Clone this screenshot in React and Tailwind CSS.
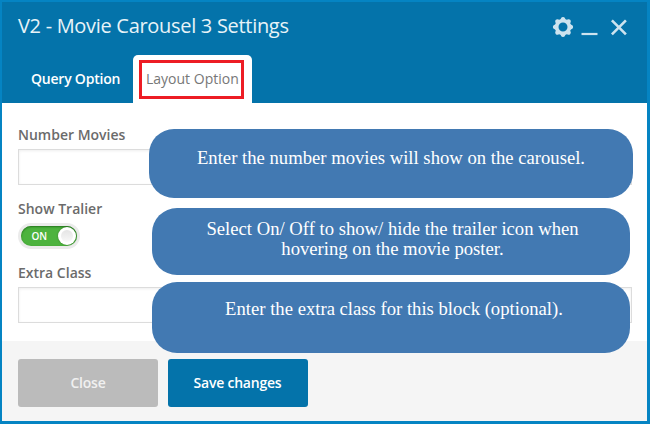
const GEAR_TEETH = [0, 45, 90, 135, 180, 225, 270, 315];

function GearIcon() {
  return (
    <svg width="22" height="22" viewBox="0 0 22 22" fill="#cde3ef">
      <circle cx="11" cy="11" r="6.3" fill="none" stroke="#cde3ef" strokeWidth="3.6" />
      {GEAR_TEETH.map((angle) => (
        <path key={angle} d="M8.1 4 L9.3 1.7 Q9.7 0.9 11 0.9 Q12.3 0.9 12.7 1.7 L13.9 4 Z" transform={`rotate(${angle} 11 11)`} />
      ))}
    </svg>
  );
}

function Header() {
  return (
    <header className="flex h-[101px] flex-col justify-between bg-[#0473aa]">
      <div className="flex items-start justify-between pl-4">
        <h1 className="mt-[10px] text-[20px] leading-7 tracking-[-0.3px] whitespace-nowrap text-[#e8f3f8]">V2 - Movie Carousel 3 Settings</h1>
        <div className="mt-[14px] mr-[17px] flex">
          <GearIcon />
          <svg className="ml-[5px]" width="22" height="22" viewBox="0 0 22 22">
            <path d="M2.5 18H18.5" stroke="#cde3ef" strokeWidth="2.2" />
          </svg>
          <svg className="ml-[7px]" width="22" height="22" viewBox="0 0 22 22">
            <path d="M3.9 4.3L17.9 18.3M17.9 4.3L3.9 18.3" stroke="#cde3ef" strokeWidth="2.6" />
          </svg>
        </div>
      </div>
      <nav className="flex h-12 pl-[15px] text-[14px] leading-5">
        <div className="w-[116px] pt-[14px] pl-[14px] font-semibold tracking-[-0.22px] whitespace-nowrap text-white">Query Option</div>
        <div className="w-[119px] rounded-t-[5px] bg-white pt-[5px] pl-[6px]">
          <div className="h-[39px] w-[105px] border-[3px] border-[#ed1c24] pt-[6px] pl-1 whitespace-nowrap text-[#777]">Layout Option</div>
        </div>
      </nav>
    </header>
  );
}

function Label({ children }) {
  return <div className="h-5 text-[14px] leading-5 font-semibold whitespace-nowrap text-[#6b6b6b]">{children}</div>;
}

function Field() {
  return <div className="h-9 border border-[#dcdcdc] bg-white shadow-[inset_0_1px_3px_#00000012]" />;
}

function Toggle() {
  return (
    <div className="flex h-[26px] w-[62px] items-center rounded-full bg-[#ebebeb] p-[3px]">
      <div className="flex h-5 w-full items-center justify-between rounded-full bg-[#4db33e] pl-[10.5px] shadow-[inset_0_1px_2px_#24751c]">
        <span className="text-[10px] leading-none font-semibold text-white">ON</span>
        <span className="mr-px flex size-[18px] items-center justify-center rounded-full bg-white shadow-[0_0_2px_#00000055]">
          <span className="size-3 rounded-full bg-linear-to-b from-[#e4e4e4] to-[#f8f8f8]" />
        </span>
      </div>
    </div>
  );
}

function Callout({ className, children }) {
  return (
    <div className={`absolute rounded-[25px] bg-[#4279b2] text-center font-['Liberation_Serif',serif] text-[18.67px] leading-5 whitespace-nowrap text-white ${className}`}>
      {children}
    </div>
  );
}

export default function App() {
  return (
    <div className="relative h-[424px] w-[650px] overflow-hidden border-t-2 border-r-[3px] border-b-[3px] border-l-2 border-[#0584c3] bg-white font-['Open_Sans',sans-serif]">
      <Header />
      <main className="h-[238px] pt-[22px] pr-[15px] pl-4">
        <Label>Number Movies</Label>
        <div className="mt-1"><Field /></div>
        <div className="mt-[14px]"><Label>Show Tralier</Label></div>
        <div className="mt-1 h-[26px]"><Toggle /></div>
        <div className="mt-[14px]"><Label>Extra Class</Label></div>
        <div className="mt-1"><Field /></div>
      </main>
      <footer className="flex h-20 gap-[10px] bg-[#f5f5f5] pt-[18px] pl-4 text-[14px] leading-5 font-semibold tracking-[-0.22px]">
        <button className="h-12 w-[140px] rounded-[3px] bg-[#bbb] text-[#f0f0f0]">Close</button>
        <button className="h-12 w-[140px] rounded-[3px] bg-[#0473aa] pr-px text-white">Save changes</button>
      </footer>
      <Callout className="top-[127px] left-[147px] h-[69px] w-[484px] pt-[19px]">Enter the number movies will show on the carousel.</Callout>
      <Callout className="top-[206px] left-[150px] h-[67px] w-[478px] pt-[11px] pl-[3px]">
        Select On/ Off to show/ hide the trailer icon when<br />hovering on the movie poster.
      </Callout>
      <Callout className="top-[280px] left-[150px] h-[71px] w-[478px] pt-[17px] pl-[6px]">Enter the extra class for this block (optional).</Callout>
    </div>
  );
}
